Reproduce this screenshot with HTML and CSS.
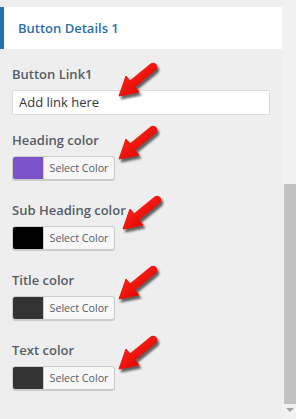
FILE: index.html
```html
<!DOCTYPE html>
<html>
<head>
<meta charset="utf-8">
<link rel="stylesheet" href="styles.css">
</head>
<body>
<div class="frame">
  <div class="panel">
    <div class="section-head">Button Details 1</div>
    <div class="fields">
      <div class="field field-link">
        <label class="label">Button Link1</label>
        <div class="text-input">Add link here</div>
        <svg class="arrow" viewBox="0 0 44 38" width="44" height="38"><use href="#arr"/></svg>
      </div>
      <div class="field">
        <label class="label">Heading color</label>
        <div class="color-btn"><span class="swatch" style="background:#7b52c7"></span><span class="btn-text">Select Color</span></div>
        <svg class="arrow" viewBox="0 0 44 38" width="44" height="38"><use href="#arr"/></svg>
      </div>
      <div class="field">
        <label class="label">Sub Heading color</label>
        <div class="color-btn"><span class="swatch" style="background:#000000"></span><span class="btn-text">Select Color</span></div>
        <svg class="arrow arrow-alt" viewBox="0 0 44 38" width="44" height="38"><use href="#arr"/></svg>
      </div>
      <div class="field">
        <label class="label">Title color</label>
        <div class="color-btn"><span class="swatch" style="background:#333333"></span><span class="btn-text">Select Color</span></div>
        <svg class="arrow" viewBox="0 0 44 38" width="44" height="38"><use href="#arr"/></svg>
      </div>
      <div class="field">
        <label class="label">Text color</label>
        <div class="color-btn"><span class="swatch" style="background:#333333"></span><span class="btn-text">Select Color</span></div>
        <svg class="arrow" viewBox="0 0 44 38" width="44" height="38"><use href="#arr"/></svg>
      </div>
    </div>
  </div>
  <div class="scrollbar">
    <div class="thumb"></div>
    <div class="down"></div>
  </div>
</div>
<svg width="0" height="0" class="defs">
  <defs>
    <linearGradient id="rg" x1="0" y1="0" x2="1" y2="1">
      <stop offset="0" stop-color="#ff2a1a"/>
      <stop offset="1" stop-color="#e00000"/>
    </linearGradient>
    <g id="arr">
      <line x1="15" y1="24" x2="37" y2="6" stroke="url(#rg)" stroke-width="8.5" stroke-linecap="round"/>
      <polygon points="3,35 23,31 10,15" fill="url(#rg)" stroke="#f01000" stroke-width="1" stroke-linejoin="round"/>
    </g>
  </defs>
</svg>
</body>
</html>
```

FILE: styles.css
```css
html, body {
  margin: 0;
  padding: 0;
}
body {
  background: #eeeeee;
  font-family: "Open Sans", "Noto Sans", sans-serif;
  width: 296px;
  height: 419px;
  overflow: hidden;
}
.frame {
  display: flex;
  height: 419px;
}
.panel {
  width: 282px;
  padding-top: 7px;
  background: #eeeeee;
}
.section-head {
  height: 42px;
  background: #ffffff;
  border-left: 4px solid #2271b1;
  padding-left: 14px;
  display: flex;
  align-items: center;
  color: #2c6fab;
  font-size: 13px;
  font-weight: 600;
  box-sizing: border-box;
}
.fields {
  padding: 15px 12px 0;
}
.field {
  position: relative;
  margin-bottom: 20px;
}
.field-link {
  margin-bottom: 15px;
}
.label {
  display: block;
  height: 20px;
  line-height: 20px;
  font-size: 13px;
  font-weight: 600;
  color: #555d66;
  margin-bottom: 6px;
}
.field .color-btn {
  margin-top: 1px;
}
.text-input {
  height: 25px;
  box-sizing: border-box;
  border: 1px solid #dddddd;
  background: #ffffff;
  padding-left: 6px;
  font-size: 13px;
  line-height: 23px;
  color: #32373c;
}
.color-btn {
  display: flex;
  width: 103px;
  height: 24px;
  box-sizing: border-box;
  border: 1px solid #cccccc;
  border-radius: 3px;
  background: #f7f7f7;
  overflow: hidden;
  box-shadow: 0 1px 0 #cccccc;
}
.swatch {
  width: 30px;
  height: 100%;
  border-right: 1px solid #cccccc;
}
.btn-text {
  flex: 1;
  font-size: 10.7px;
  line-height: 22px;
  color: #555d66;
  text-align: center;
}
.arrow {
  position: absolute;
  left: 104px;
  top: -6px;
  filter: drop-shadow(2px 3px 1px rgba(0,0,0,0.6));
}
.field-link .arrow {
  top: -3px;
}
.arrow-alt {
  left: 108px;
}
.scrollbar {
  width: 14px;
  background: #f1f1f1;
  display: flex;
  flex-direction: column;
}
.thumb {
  margin-top: 184px;
  margin-left: 2px;
  width: 12px;
  height: 220px;
  background: #c1c1c1;
}
.down {
  margin: 4px 0 0 4px;
  width: 0;
  height: 0;
  border-left: 4px solid transparent;
  border-right: 4px solid transparent;
  border-top: 4px solid #a3a3a3;
}
.defs {
  position: absolute;
}
```
